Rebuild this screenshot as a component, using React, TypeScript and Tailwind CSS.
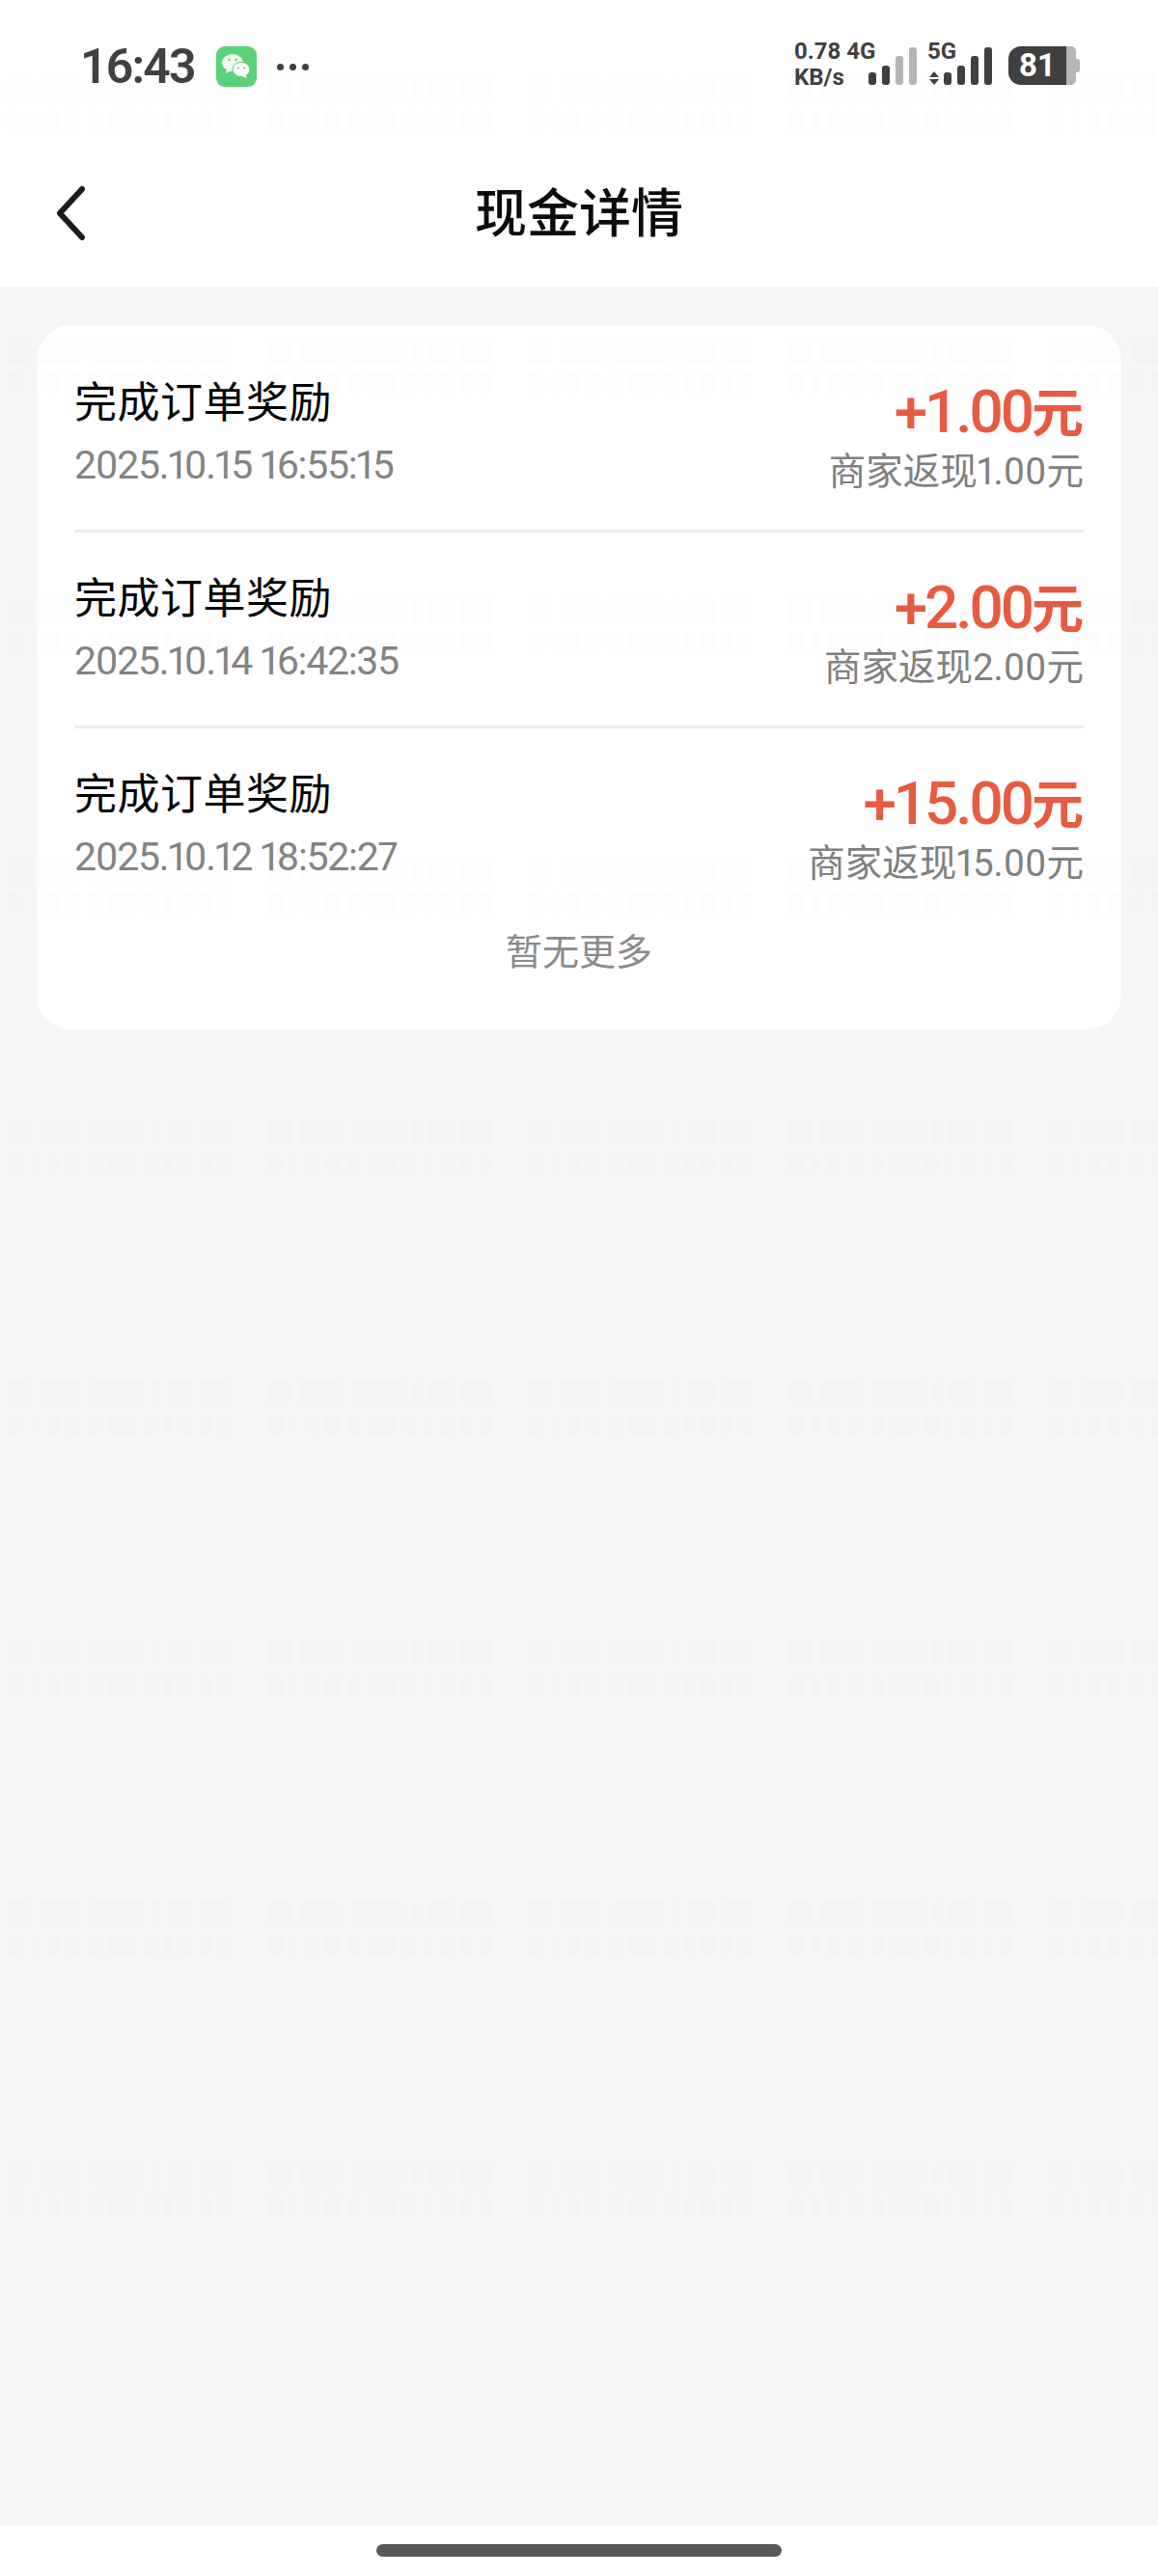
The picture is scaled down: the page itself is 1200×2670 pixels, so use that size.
import React from "react";

const records = [
  { title: "完成订单奖励", time: "2025.10.15 16:55:15", amount: "+1.00", note: "商家返现1.00元" },
  { title: "完成订单奖励", time: "2025.10.14 16:42:35", amount: "+2.00", note: "商家返现2.00元" },
  { title: "完成订单奖励", time: "2025.10.12 18:52:27", amount: "+15.00", note: "商家返现15.00元" },
];

const cjk = "font-['Roboto','Noto_Sans_CJK_SC',sans-serif]";

// faint mosaic watermark that repeats across the upper part of the screen
const markBlocks = [
  [0, 0, 25, 27], [33, 0, 44, 27], [85, 0, 58, 27], [150, 0, 10, 27], [166, 0, 28, 27], [200, 0, 33, 27],
  [0, 35, 16, 23], [24, 35, 8, 23], [40, 35, 14, 23], [60, 35, 16, 23], [84, 35, 14, 23], [104, 35, 30, 23],
  [140, 35, 16, 23], [162, 35, 10, 23], [178, 35, 16, 23], [200, 35, 12, 23], [218, 35, 14, 23],
];

const Watermark = () => (
  <svg className="pointer-events-none absolute inset-0" width="1200" height="2670" aria-hidden="true">
    <defs>
      <pattern id="mark" x="7" y="80" width="270" height="270" patternUnits="userSpaceOnUse">
        {markBlocks.map(([x, y, w, h], i) => (
          <rect key={i} x={x} y={y} width={w} height={h} fill="#000" fillOpacity="0.006" />
        ))}
      </pattern>
    </defs>
    <rect width="1200" height="2320" fill="url(#mark)" />
  </svg>
);

const SignalBars = ({ dim }: { dim: number }) => (
  <div className="flex items-end gap-[6px]">
    {[13, 20, 30, 39].map((h, i) => (
      <div
        key={i}
        className={`w-[8px] rounded-[3px] ${i >= 4 - dim ? "bg-[#b5b5b5]" : "bg-[#404040]"}`}
        style={{ height: h }}
      />
    ))}
  </div>
);

const WeChatIcon = () => (
  <div className="flex h-[42px] w-[42px] items-center justify-center rounded-[9px] bg-[#5bd178]">
    <svg width="32" height="30" viewBox="0 0 32 30">
      <ellipse cx="12" cy="11" rx="11" ry="9" fill="#fff" opacity="0.9" />
      <path d="M6 17l-1 5 6-3z" fill="#fff" opacity="0.9" />
      <ellipse cx="21" cy="18" rx="9" ry="7.6" fill="#fff" stroke="#5bd178" strokeWidth="1" />
      <path d="M25 23l2 4-5-2z" fill="#fff" />
      <circle cx="8.5" cy="8" r="1.2" fill="#5bd178" />
      <circle cx="15.5" cy="8" r="1.2" fill="#5bd178" />
      <circle cx="18" cy="16.5" r="1.1" fill="#5bd178" />
      <circle cx="24" cy="16.5" r="1.1" fill="#5bd178" />
    </svg>
  </div>
);

const StatusBar = () => (
  <div className="flex h-[140px] items-start justify-between pt-[48px] pl-[83px] pr-[81px]">
    <div className="flex h-[42px] items-center">
      <span className="font-['Roboto',sans-serif] text-[50px] leading-none font-semibold tracking-[-1.8px] text-[#404040]">16:43</span>
      <div className="ml-[22px]">
        <WeChatIcon />
      </div>
      <div className="ml-[21px] flex gap-[6px]">
        <div className="h-[7px] w-[7px] rounded-full bg-[#404040]" />
        <div className="h-[7px] w-[7px] rounded-full bg-[#404040]" />
        <div className="h-[7px] w-[7px] rounded-full bg-[#404040]" />
      </div>
    </div>
    <div className="flex h-[40px] items-end">
      <div className="mb-[-6px] w-[91px] font-['Roboto',sans-serif] text-[24px] leading-[27px] font-bold whitespace-nowrap text-[#404040]">
        <div>0.78 4G</div>
        <div>KB/s</div>
      </div>
      <div className="ml-[-14px]">
        <SignalBars dim={2} />
      </div>
      <div className="ml-[11px] flex w-[31px] flex-col items-start">
        <span className="mb-[10px] font-['Roboto',sans-serif] text-[24px] leading-[20px] font-bold text-[#404040]">5G</span>
        <div className="ml-[2px] flex h-[15px] flex-col justify-center gap-[2px]">
          <div className="h-0 w-0 border-x-[5px] border-b-[6px] border-x-transparent border-b-[#404040]" />
          <div className="h-0 w-0 border-x-[5px] border-t-[6px] border-x-transparent border-t-[#404040]" />
        </div>
      </div>
      <div className="ml-[-14px]">
        <SignalBars dim={0} />
      </div>
      <div className="ml-[17px] flex items-center">
        <div className="flex h-[40px] w-[60px] items-center justify-center rounded-l-[13px] bg-[#404040] font-['Roboto',sans-serif] text-[33px] font-bold text-white">
          81
        </div>
        <div className="h-[40px] w-[10px] rounded-r-[5px] bg-[#b5b5b5]" />
        <div className="h-[14px] w-[4px] rounded-r-[3px] bg-[#b5b5b5]" />
      </div>
    </div>
  </div>
);

const NavBar = () => (
  <div className="relative flex h-[159px] items-center justify-center border-b border-[#f0f0f0] pt-[7px]">
    <svg className="absolute left-[56px] top-[52px]" width="34" height="58" viewBox="0 0 34 58" fill="none">
      <path d="M29 4L6 29l23 25" stroke="#1c1c1c" strokeWidth="6" strokeLinecap="round" strokeLinejoin="round" />
    </svg>
    <h1 className={`${cjk} text-[54px] leading-none font-medium text-[#0c0c0c]`}>现金详情</h1>
  </div>
);

const RecordRow = ({ title, time, amount, note, last }: { title: string; time: string; amount: string; note: string; last: boolean }) => (
  <div className={`flex h-[203px] items-start justify-between ${last ? "" : "border-b-[3px] border-[#ebebeb]"}`}>
    <div className="pt-[41px]">
      <div className={`${cjk} text-[44px] leading-[56px] tracking-[0.5px] text-black`}>{title}</div>
      <div className="mt-[12px] font-['Roboto',sans-serif] text-[41px] leading-[48px] tracking-[-1.3px] text-[#838383] [font-variant-numeric:proportional-nums]">{time}</div>
    </div>
    <div className="flex flex-col items-end pt-[44px]">
      <div className={`${cjk} flex items-baseline text-[#e85b41]`}>
        <span className="text-[62px] leading-[68px] font-medium tracking-[-3px]">{amount}</span>
        <span className="text-[54px] leading-[68px] font-semibold">元</span>
      </div>
      <div className={`${cjk} mt-[1px] text-[38.5px] leading-[48px] text-[#808080] [font-variant-numeric:proportional-nums]`}>{note}</div>
    </div>
  </div>
);

export default function App() {
  return (
    <div className="relative flex h-[2670px] w-[1200px] flex-col overflow-hidden bg-[#f6f6f6]">
      <div className="bg-white">
        <StatusBar />
        <NavBar />
      </div>
      <div className="flex-1 px-[38px] pt-[38px]">
        <div className="rounded-[36px] bg-white px-[39px] pt-[12px] pb-[56px]">
          {records.map((r, i) => (
            <RecordRow key={i} {...r} last={i === records.length - 1} />
          ))}
          <div className={`${cjk} mt-[5px] text-center text-[38px] leading-[48px] text-[#8a8a8a]`}>暂无更多</div>
        </div>
      </div>
      <div className="flex h-[52px] items-start justify-center bg-white pt-[19px]">
        <div className="h-[13px] w-[420px] rounded-full bg-[#595959]" />
      </div>
      <Watermark />
    </div>
  );
}
